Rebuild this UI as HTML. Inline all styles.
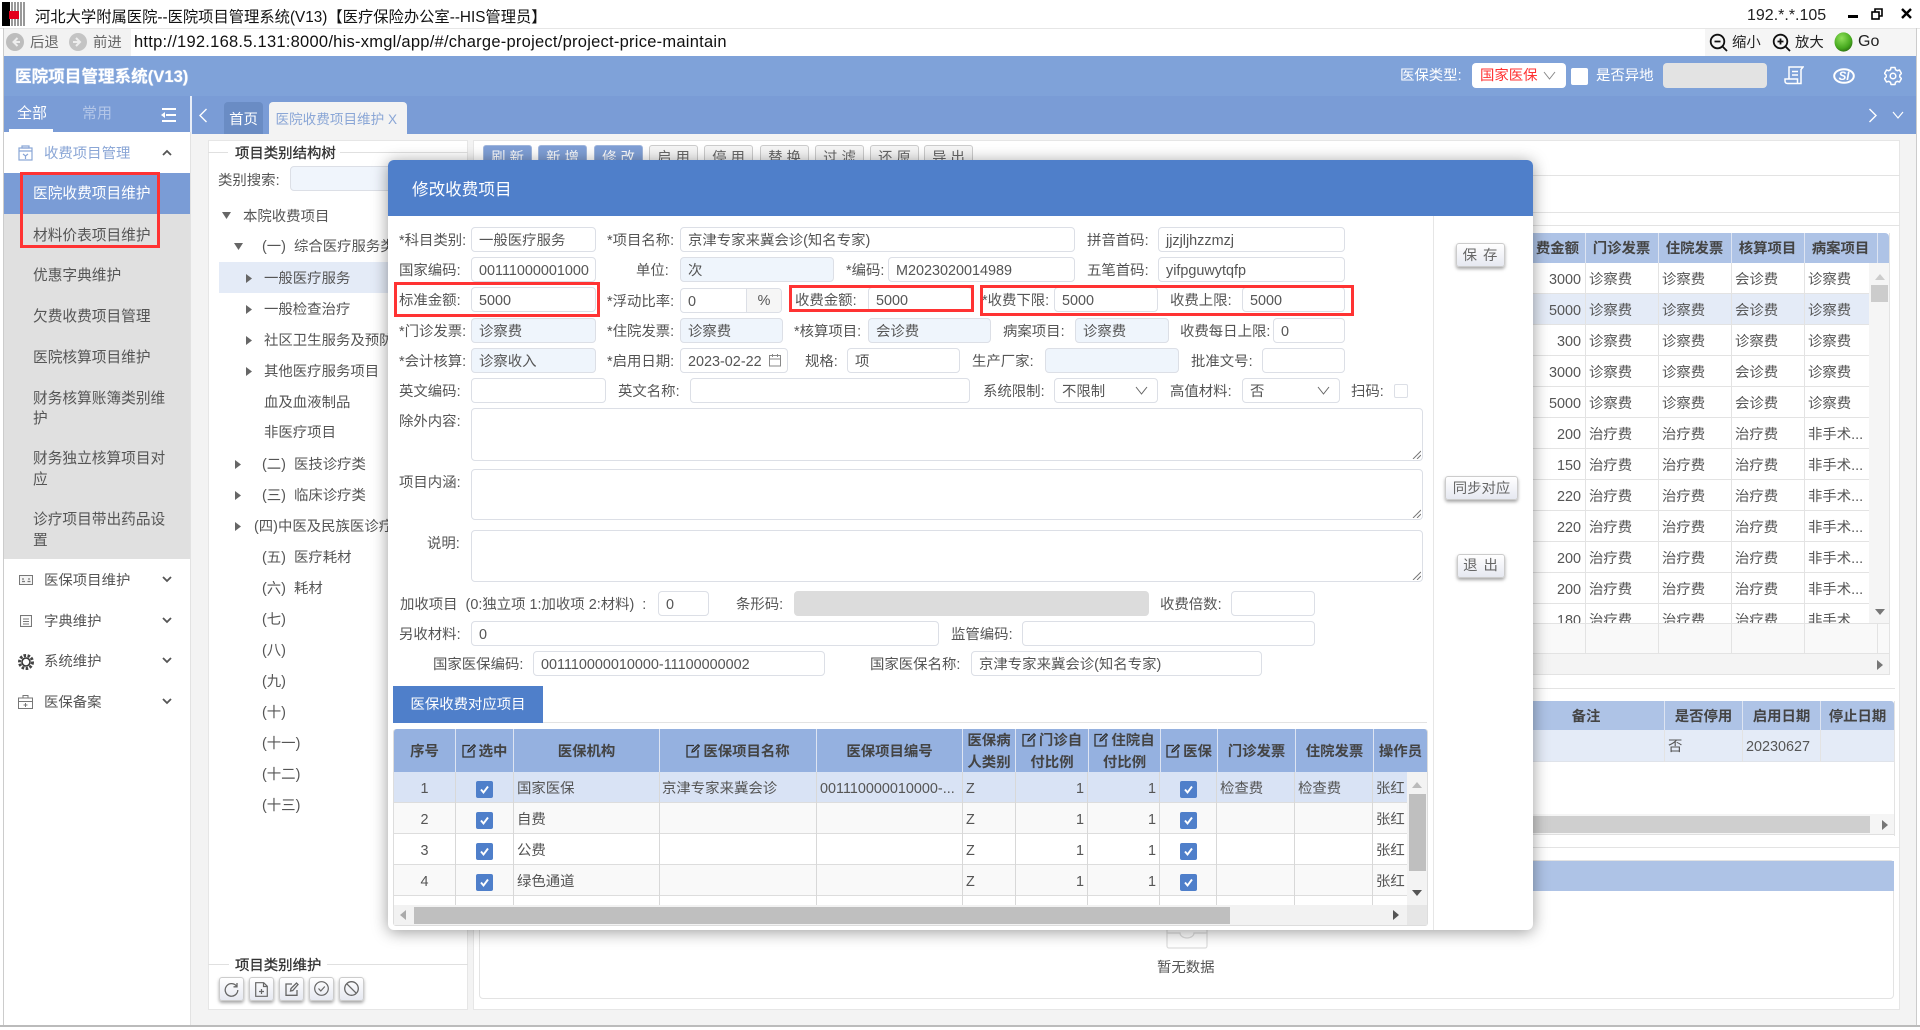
<!DOCTYPE html>
<html lang="zh-CN"><head><meta charset="utf-8"><title>医院项目管理系统</title>
<style>
*{box-sizing:border-box;margin:0;padding:0}
html,body{width:1920px;height:1030px;overflow:hidden;background:#fff}
body{position:relative;font:14.4px/22px "Liberation Sans","Noto Sans CJK SC",sans-serif;color:#555}
div,svg{position:absolute}
div{white-space:nowrap}
.w{color:#fff}
.m{color:#555;left:33px;line-height:23px;font-size:14.7px}
.n{left:44px;color:#555}
.car{left:162px;width:10px;height:7px}
.tr{color:#555}
.i{height:25px;border:1px solid #dcdfe6;border-radius:4px;background:#fff;padding-left:7px;line-height:26px;color:#555;overflow:hidden}
.bl{background:#eff5fc}
.l{height:25px;line-height:28px;color:#555}
.ta{left:471px;width:952px;border:1px solid #dcdfe6;border-radius:4px;background:#fff}
.rz{right:1px;bottom:1px;width:9px;height:9px}
.red{border:3px solid #f33;z-index:5}
.b{background:linear-gradient(#fff,#e6e9f1);border:1px solid #ccc;border-radius:3px;box-shadow:0 2px 3px rgba(0,0,0,.35);text-align:center;color:#666}
.tb{top:145px;width:49px;height:30px;border:1px solid #ccc;border-radius:3px;background:#f5f5f5;text-align:center;line-height:24px;color:#666}
.tbb{background:#7f9fd6;color:#fff;border-color:#a0b6dc}
.th{top:729px;height:43px;line-height:46px;text-align:center;font-weight:700;color:#444;font-size:14.4px}
.th2{line-height:22px;padding-top:1px}
.th svg{position:static;vertical-align:-2px;margin-right:3px}
.ck{width:17px;height:17px;background:#4f7fca;border-radius:2px}
.ck svg{left:3px;top:3px;width:11px;height:11px}
.vl{width:1px;background:#d8d8d8}
.hv{width:1px;background:#dde4f2;top:729px;height:43px}
.hl{height:1px;background:#ddd}
.c{line-height:35px}
.bh{top:233px;height:30px;line-height:33px;font-weight:700;color:#444;text-align:center}
.bh2{top:701px}
.row{left:1533px;width:336px;height:31px;background:#fff;border-bottom:1px solid #e3e3e3}
.bc{line-height:35px;color:#555}
.bvl{width:1px;background:#e3e3e3}
</style></head><body>

<!-- window title -->
<svg style="left:2px;top:2px" width="24" height="24" viewBox="0 0 24 24"><rect width="8" height="24" fill="#000"/><rect x="8" width="16" height="24" fill="#fff"/><g fill="#999"><rect x="9" width="2" height="24"/><rect x="12" width="2" height="24"/><rect x="15" width="2" height="24"/><rect x="18" width="2" height="24"/><rect x="21" width="2" height="24"/></g><rect x="7" y="9" width="10" height="8" fill="#e3001b"/></svg>
<div style="left:35px;top:7px;font-size:15.3px;color:#111">河北大学附属医院--医院项目管理系统(V13)【医疗保险办公室--HIS管理员】</div>
<div style="left:1747px;top:5px;font-size:16px;color:#222">192.*.*.105</div>
<div style="left:1848px;top:15px;width:10px;height:3px;background:#000"></div>
<svg style="left:1871px;top:8px" width="12" height="12" viewBox="0 0 12 12" fill="none" stroke="#000" stroke-width="1.6"><rect x="1" y="4" width="7" height="7"/><path d="M4 4V1h7v7H8"/></svg>
<svg style="left:1901px;top:8px" width="11" height="11" viewBox="0 0 11 11" stroke="#000" stroke-width="2.4"><path d="M1 1l9 9M10 1l-9 9"/></svg>
<div style="left:0;top:28px;width:1920px;height:1px;background:#e6e6e6"></div>

<!-- address bar -->
<div style="left:4px;top:29px;width:127px;height:27px;background:#f2f2f2"></div>
<div style="left:1705px;top:29px;width:211px;height:27px;background:#f5f5f5"></div>
<svg style="left:6px;top:33px" width="18" height="18" viewBox="0 0 18 18"><circle cx="9" cy="9" r="9" fill="#bdbdbd"/><path d="M11.5 5L7.5 9l4 4M8 9h6" fill="none" stroke="#eee" stroke-width="2"/></svg>
<div style="left:30px;top:32px;font-size:14.4px;color:#666">后退</div>
<svg style="left:69px;top:33px" width="18" height="18" viewBox="0 0 18 18"><circle cx="9" cy="9" r="9" fill="#c4c4c4"/><path d="M7 5l4 4-4 4M4 9h6" fill="none" stroke="#eee" stroke-width="2"/></svg>
<div style="left:93px;top:32px;font-size:14.4px;color:#666">前进</div>
<div style="left:134px;top:31px;font-size:16.5px;letter-spacing:.25px;color:#111">http://192.168.5.131:8000/his-xmgl/app/#/charge-project/project-price-maintain</div>
<svg style="left:1709px;top:33px" width="20" height="20" viewBox="0 0 20 20" fill="none" stroke="#111" stroke-width="1.8"><circle cx="8.5" cy="8.5" r="6.8"/><path d="M5.5 8.5h6M13.5 13.500l4.500 4.500"/></svg>
<div style="left:1732px;top:32px;color:#222">缩小</div>
<svg style="left:1772px;top:33px" width="20" height="20" viewBox="0 0 20 20" fill="none" stroke="#111" stroke-width="1.8"><circle cx="8.5" cy="8.5" r="6.8"/><path d="M5.5 8.5h6M8.5 5.500v6M13.5 13.500l4.500 4.500"/></svg>
<div style="left:1795px;top:32px;color:#222">放大</div>
<svg style="left:1834px;top:32px" width="19" height="20" viewBox="0 0 19 20"><defs><radialGradient id="g" cx=".4" cy=".3" r=".75"><stop offset="0" stop-color="#8fe05a"/><stop offset=".7" stop-color="#45a81e"/><stop offset="1" stop-color="#2c6d12"/></radialGradient></defs><ellipse cx="9.5" cy="10" rx="9" ry="9.6" fill="url(#g)"/></svg>
<div style="left:1858px;top:31px;font-size:16px;color:#222">Go</div>

<!-- header -->
<div style="left:4px;top:56px;width:1912px;height:40px;background:#7fa2d9"></div>
<div style="left:15px;top:66px;font-size:16.6px;font-weight:700;color:#fff;text-shadow:0 0 1px #dfe8f7">医院项目管理系统(V13)</div>
<div class="w" style="left:1400px;top:65px">医保类型:</div>
<div style="left:1472px;top:63px;width:94px;height:25px;background:#fff;border-radius:4px;line-height:26px;padding-left:8px;color:#f33">国家医保</div>
<svg style="left:1543px;top:71px" width="13" height="9" viewBox="0 0 13 9" fill="none" stroke="#888"><path d="M1 1l5.500 7L12 1"/></svg>
<div style="left:1571px;top:68px;width:17px;height:17px;background:#fff;border-radius:2px"></div>
<div class="w" style="left:1596px;top:65px">是否异地</div>
<div style="left:1663px;top:63px;width:104px;height:25px;background:#e3e3e3;border-radius:4px"></div>
<svg style="left:1784px;top:66px" width="20" height="19" viewBox="0 0 20 19" fill="none" stroke="#fff" stroke-width="1.5"><path d="M5 13V1h14l-2 2.500V17.500H3.500C2 17.500 1 16.500 1 15v-2h12.500v4.500M8 5.500h6M8 9h6"/></svg>
<svg style="left:1833px;top:68px" width="22" height="16" viewBox="0 0 22 16"><ellipse cx="11" cy="8" rx="9.800" ry="6.800" fill="none" stroke="#fff" stroke-width="2"/><text x="11" y="12" text-anchor="middle" font-family="Liberation Sans" font-size="11.500" font-weight="700" font-style="italic" fill="#fff">SI</text></svg>
<svg style="left:1884px;top:66px" width="18" height="20" viewBox="0 0 18 20" fill="none" stroke="#fff" stroke-width="1.500"><path d="M7 1.500h4l.5 2.200 1.800 1 2.200-.7 2 3.500-1.700 1.500v2l1.700 1.500-2 3.500-2.200-.7-1.800 1-.5 2.200H7l-.5-2.200-1.800-1-2.200.7-2-3.500L2.200 11V9L.5 7.500l2-3.500 2.200.7 1.800-1z" stroke-linejoin="round"/><circle cx="9" cy="10" r="2.800"/></svg>

<!-- tab bar -->
<div style="left:4px;top:96px;width:1912px;height:38px;background:#7a9cd6"></div>
<div style="left:190px;top:96px;width:2px;height:38px;background:#e8eef8"></div>
<div class="w" style="left:17px;top:103px;font-size:15px">全部</div>
<div style="left:82px;top:103px;font-size:15px;color:#b3c6e8">常用</div>
<div style="left:9px;top:129px;width:44px;height:3px;background:#fff"></div>
<svg style="left:160px;top:108px" width="16" height="14" viewBox="0 0 16 14" fill="#fff"><rect x="2" width="14" height="2"/><rect x="6" y="6" width="10" height="2"/><rect x="2" y="12" width="14" height="2"/><path d="M5 4L1 7l4 3z"/></svg>
<svg style="left:198px;top:108px" width="10" height="15" viewBox="0 0 10 15" fill="none" stroke="#fff" stroke-width="1.400"><path d="M8.500 1L2 7.500 8.500 14"/></svg>
<div style="left:224px;top:102px;width:39px;height:32px;background:#6a8cc4;border-radius:4px 4px 0 0;color:#fff;text-align:center;line-height:36px">首页</div>
<div style="left:269px;top:102px;width:138px;height:32px;background:#f3f3f3;border-radius:4px 4px 0 0;color:#8aa6d6;padding-left:6.500px;line-height:36px;font-size:13.600px">医院收费项目维护 X</div>
<svg style="left:1868px;top:108px" width="10" height="15" viewBox="0 0 10 15" fill="none" stroke="#fff" stroke-width="1.400"><path d="M1.500 1L8 7.500 1.500 14"/></svg>
<svg style="left:1892px;top:111px" width="12" height="8" viewBox="0 0 12 8" fill="none" stroke="#fff" stroke-width="1.200"><path d="M1 1l5 6 5-6"/></svg>

<!-- page background -->
<div style="left:4px;top:134px;width:1912px;height:891px;background:#f3f3f3"></div>
<div style="left:0;top:1025px;width:1920px;height:2px;background:#bbb"></div>
<div style="left:3px;top:28px;width:1px;height:997px;background:#ccc"></div>
<div style="left:1916px;top:28px;width:1px;height:997px;background:#ccc"></div>

<!-- sidebar -->
<div style="left:4px;top:132px;width:187px;height:893px;background:#fff;border-right:1px solid #e2e2e2"></div>
<svg style="left:18px;top:145px" width="15" height="16" viewBox="0 0 15 16" fill="none" stroke="#8aa6d6" stroke-width="1.200"><rect x="1" y="3" width="13" height="12"/><path d="M1 6h13M4 1h7v2H4zM5 9l2.500 2L10 9M7.500 11v3"/></svg>
<div class="n" style="top:143px;color:#8aa6d6">收费项目管理</div>
<svg class="car" style="top:149px" viewBox="0 0 10 7" fill="none" stroke="#555" stroke-width="1.800"><path d="M1 6l4-4 4 4"/></svg>
<div style="left:4px;top:173px;width:186px;height:41px;background:#7a9cd6"></div>
<div style="left:4px;top:214px;width:186px;height:345px;background:#e0e0e0"></div>
<div class="m w" style="top:183px;color:#fff">医院收费项目维护</div>
<div class="m" style="top:225px">材料价表项目维护</div>
<div class="m" style="top:265px">优惠字典维护</div>
<div class="m" style="top:306px">欠费收费项目管理</div>
<div class="m" style="top:347px">医院核算项目维护</div>
<div class="m" style="top:388px">财务核算账簿类别维</div>
<div class="m" style="top:408px">护</div>
<div class="m" style="top:448px">财务独立核算项目对</div>
<div class="m" style="top:469px">应</div>
<div class="m" style="top:509px">诊疗项目带出药品设</div>
<div class="m" style="top:530px">置</div>
<div class="red" style="left:20px;top:172px;width:140px;height:76px;z-index:2"></div>
<svg style="left:19px;top:575px" width="14" height="10" viewBox="0 0 14 10" fill="none" stroke="#777"><rect x=".5" y=".5" width="13" height="9" fill="#f4f4f4"/><path d="M3 6.500h3M3 4h2M9 4h2M8.500 6.500h3" stroke-width="1.200"/></svg>
<div class="n" style="top:570px">医保项目维护</div>
<svg class="car" style="top:576px" viewBox="0 0 10 7" fill="none" stroke="#555" stroke-width="1.800"><path d="M1 1l4 4 4-4"/></svg>
<svg style="left:20px;top:615px" width="12" height="12" viewBox="0 0 12 12" fill="none" stroke="#777" stroke-width="1.100"><rect x=".5" y=".5" width="11" height="11"/><path d="M3 4h6M3 6.500h6M3 9h6"/></svg>
<div class="n" style="top:611px">字典维护</div>
<svg class="car" style="top:617px" viewBox="0 0 10 7" fill="none" stroke="#555" stroke-width="1.800"><path d="M1 1l4 4 4-4"/></svg>
<svg style="left:18px;top:654px" width="16" height="16" viewBox="0 0 16 16"><circle cx="8" cy="8" r="6.500" fill="none" stroke="#444" stroke-width="3" stroke-dasharray="2.500 1.500"/><circle cx="8" cy="8" r="4" fill="none" stroke="#333" stroke-width="1.600"/></svg>
<div class="n" style="top:651px">系统维护</div>
<svg class="car" style="top:657px" viewBox="0 0 10 7" fill="none" stroke="#555" stroke-width="1.800"><path d="M1 1l4 4 4-4"/></svg>
<svg style="left:18px;top:695px" width="15" height="14" viewBox="0 0 15 14" fill="none" stroke="#777"><rect x=".5" y="3" width="14" height="10.500"/><path d="M5 3V.5h5V3M.5 6.500h14M7.500 8v4M5.500 10h4"/></svg>
<div class="n" style="top:692px">医保备案</div>
<svg class="car" style="top:698px" viewBox="0 0 10 7" fill="none" stroke="#555" stroke-width="1.800"><path d="M1 1l4 4 4-4"/></svg>

<!-- left tree panel -->
<div style="left:208px;top:140px;width:260px;height:870px;background:#fff;border:1px solid #e6e6e6"></div>
<div style="left:208px;top:152px;width:20px;height:1px;background:#e0e0e0"></div>
<div style="left:340px;top:152px;width:128px;height:1px;background:#e0e0e0"></div>
<div style="left:235px;top:143px;color:#333;-webkit-text-stroke:.3px #333">项目类别结构树</div>
<div style="left:218px;top:170px">类别搜索:</div>
<div style="left:290px;top:166px;width:170px;height:25px;background:#f0f5fc;border:1px solid #dcdfe6;border-radius:4px"></div>
<div class="tr" style="left:243px;top:206px">本院收费项目</div>
<svg style="left:222px;top:212px" width="9" height="7" viewBox="0 0 9 7" fill="#666"><path d="M0 0h9L4.500 7z"/></svg>
<div class="tr" style="left:262px;top:236px">(一)&nbsp;&nbsp;综合医疗服务类</div>
<svg style="left:234px;top:243px" width="9" height="7" viewBox="0 0 9 7" fill="#666"><path d="M0 0h9L4.500 7z"/></svg>
<div style="left:219px;top:262px;width:170px;height:31px;background:#e4ebf7"></div>
<div class="tr" style="left:264px;top:268px">一般医疗服务</div>
<svg style="left:246px;top:274px" width="6" height="9" viewBox="0 0 6 9" fill="#666"><path d="M0 0v9l6-4.500z"/></svg>
<div class="tr" style="left:264px;top:299px">一般检查治疗</div>
<svg style="left:246px;top:305px" width="6" height="9" viewBox="0 0 6 9" fill="#666"><path d="M0 0v9l6-4.500z"/></svg>
<div class="tr" style="left:264px;top:330px">社区卫生服务及预防</div>
<svg style="left:246px;top:336px" width="6" height="9" viewBox="0 0 6 9" fill="#666"><path d="M0 0v9l6-4.500z"/></svg>
<div class="tr" style="left:264px;top:361px">其他医疗服务项目</div>
<svg style="left:246px;top:367px" width="6" height="9" viewBox="0 0 6 9" fill="#666"><path d="M0 0v9l6-4.500z"/></svg>
<div class="tr" style="left:264px;top:392px">血及血液制品</div>
<div class="tr" style="left:264px;top:422px">非医疗项目</div>
<div class="tr" style="left:262px;top:454px">(二)&nbsp;&nbsp;医技诊疗类</div>
<svg style="left:235px;top:460px" width="6" height="9" viewBox="0 0 6 9" fill="#666"><path d="M0 0v9l6-4.500z"/></svg>
<div class="tr" style="left:262px;top:485px">(三)&nbsp;&nbsp;临床诊疗类</div>
<svg style="left:235px;top:491px" width="6" height="9" viewBox="0 0 6 9" fill="#666"><path d="M0 0v9l6-4.500z"/></svg>
<div class="tr" style="left:254px;top:516px">(四)中医及民族医诊疗</div>
<svg style="left:235px;top:522px" width="6" height="9" viewBox="0 0 6 9" fill="#666"><path d="M0 0v9l6-4.500z"/></svg>
<div class="tr" style="left:262px;top:547px">(五)&nbsp;&nbsp;医疗耗材</div>
<div class="tr" style="left:262px;top:578px">(六)&nbsp;&nbsp;耗材</div>
<div class="tr" style="left:262px;top:609px">(七)</div>
<div class="tr" style="left:262px;top:640px">(八)</div>
<div class="tr" style="left:262px;top:671px">(九)</div>
<div class="tr" style="left:262px;top:702px">(十)</div>
<div class="tr" style="left:262px;top:733px">(十一)</div>
<div class="tr" style="left:262px;top:764px">(十二)</div>
<div class="tr" style="left:262px;top:795px">(十三)</div>
<div style="left:208px;top:964px;width:21px;height:1px;background:#e0e0e0"></div>
<div style="left:327px;top:964px;width:141px;height:1px;background:#e0e0e0"></div>
<div style="left:235px;top:955px;color:#333;-webkit-text-stroke:.3px #333">项目类别维护</div>
<div class="b" style="left:219px;top:977px;width:25px;height:24px"></div>
<div class="b" style="left:249px;top:977px;width:25px;height:24px"></div>
<div class="b" style="left:279px;top:977px;width:25px;height:24px"></div>
<div class="b" style="left:309px;top:977px;width:25px;height:24px"></div>
<div class="b" style="left:339px;top:977px;width:25px;height:24px"></div>
<svg style="left:224px;top:982px" width="15" height="15" viewBox="0 0 15 15" fill="none" stroke="#666" stroke-width="1.300"><path d="M12.800 4.500A6.300 6.300 0 1 0 13.800 8M13 1v3.800H9.500"/></svg>
<svg style="left:255px;top:982px" width="13" height="15" viewBox="0 0 13 15" fill="none" stroke="#666" stroke-width="1.200"><path d="M.7.700h8l3.600 3.600v10H.7zM8.500.700v3.800h3.800M6.500 7v5M4 9.500h5"/></svg>
<svg style="left:285px;top:982px" width="14" height="14" viewBox="0 0 14 14" fill="none" stroke="#666" stroke-width="1.300"><path d="M7 2H1v11.300h11V8M5.500 9l.5-2.500L11.500 1 13 2.500 7.800 8.500z"/></svg>
<svg style="left:314px;top:981px" width="15" height="15" viewBox="0 0 15 15" fill="none" stroke="#666" stroke-width="1.200"><circle cx="7.500" cy="7.500" r="6.800"/><path d="M4.500 7.500l2.300 2.500 4-4.500"/></svg>
<svg style="left:344px;top:981px" width="15" height="15" viewBox="0 0 15 15" fill="none" stroke="#666" stroke-width="1.300"><circle cx="7.500" cy="7.500" r="6.800"/><path d="M2.800 2.800l9.400 9.400"/></svg>

<!-- right panel behind modal -->
<div style="left:473px;top:140px;width:1427px;height:870px;background:#fff;border:1px solid #e6e6e6"></div>
<div class="tb tbb" style="left:483px">刷 新</div>
<div class="tb tbb" style="left:538px">新 增</div>
<div class="tb tbb" style="left:594px">修 改</div>
<div class="tb" style="left:649px">启 用</div>
<div class="tb" style="left:704px">停 用</div>
<div class="tb" style="left:760px">替 换</div>
<div class="tb" style="left:815px">过 滤</div>
<div class="tb" style="left:870px">还 原</div>
<div class="tb" style="left:924px">导 出</div>
<div style="left:473px;top:175px;width:1427px;height:1px;background:#e3e3e3"></div>
<div style="left:473px;top:212px;width:1427px;height:1px;background:#e3e3e3"></div>
<div style="left:473px;top:225px;width:1427px;height:1px;background:#e3e3e3"></div>

<!-- right table top -->
<div style="left:1500px;top:233px;width:389px;height:30px;background:#aec3e6;border-radius:0 4px 0 0"></div>
<div class="bh" style="left:1533px;width:52px;overflow:hidden;text-align:right;padding-right:6px">费金额</div>
<div class="bh" style="left:1585px;width:73px">门诊发票</div>
<div class="bh" style="left:1658px;width:73px">住院发票</div>
<div class="bh" style="left:1731px;width:73px">核算项目</div>
<div class="bh" style="left:1804px;width:73px">病案项目</div>
<div class="row" style="top:263px"></div>
<div class="row" style="top:294px;background:#e4ebf7"></div>
<div class="row" style="top:325px"></div>
<div class="row" style="top:356px"></div>
<div class="row" style="top:387px"></div>
<div class="row" style="top:418px"></div>
<div class="row" style="top:449px"></div>
<div class="row" style="top:480px"></div>
<div class="row" style="top:511px"></div>
<div class="row" style="top:542px"></div>
<div class="row" style="top:573px"></div>

<div class="bc" style="left:1533px;width:48px;text-align:right;top:263px">3000</div><div class="bc" style="left:1589px;top:263px">诊察费</div><div class="bc" style="left:1662px;top:263px">诊察费</div><div class="bc" style="left:1735px;top:263px">会诊费</div><div class="bc" style="left:1808px;top:263px">诊察费</div>
<div class="bc" style="left:1533px;width:48px;text-align:right;top:294px">5000</div><div class="bc" style="left:1589px;top:294px">诊察费</div><div class="bc" style="left:1662px;top:294px">诊察费</div><div class="bc" style="left:1735px;top:294px">会诊费</div><div class="bc" style="left:1808px;top:294px">诊察费</div>
<div class="bc" style="left:1533px;width:48px;text-align:right;top:325px">300</div><div class="bc" style="left:1589px;top:325px">诊察费</div><div class="bc" style="left:1662px;top:325px">诊察费</div><div class="bc" style="left:1735px;top:325px">诊察费</div><div class="bc" style="left:1808px;top:325px">诊察费</div>
<div class="bc" style="left:1533px;width:48px;text-align:right;top:356px">3000</div><div class="bc" style="left:1589px;top:356px">诊察费</div><div class="bc" style="left:1662px;top:356px">诊察费</div><div class="bc" style="left:1735px;top:356px">会诊费</div><div class="bc" style="left:1808px;top:356px">诊察费</div>
<div class="bc" style="left:1533px;width:48px;text-align:right;top:387px">5000</div><div class="bc" style="left:1589px;top:387px">诊察费</div><div class="bc" style="left:1662px;top:387px">诊察费</div><div class="bc" style="left:1735px;top:387px">会诊费</div><div class="bc" style="left:1808px;top:387px">诊察费</div>
<div class="bc" style="left:1533px;width:48px;text-align:right;top:418px">200</div><div class="bc" style="left:1589px;top:418px">治疗费</div><div class="bc" style="left:1662px;top:418px">治疗费</div><div class="bc" style="left:1735px;top:418px">治疗费</div><div class="bc" style="left:1808px;top:418px">非手术...</div>
<div class="bc" style="left:1533px;width:48px;text-align:right;top:449px">150</div><div class="bc" style="left:1589px;top:449px">治疗费</div><div class="bc" style="left:1662px;top:449px">治疗费</div><div class="bc" style="left:1735px;top:449px">治疗费</div><div class="bc" style="left:1808px;top:449px">非手术...</div>
<div class="bc" style="left:1533px;width:48px;text-align:right;top:480px">220</div><div class="bc" style="left:1589px;top:480px">治疗费</div><div class="bc" style="left:1662px;top:480px">治疗费</div><div class="bc" style="left:1735px;top:480px">治疗费</div><div class="bc" style="left:1808px;top:480px">非手术...</div>
<div class="bc" style="left:1533px;width:48px;text-align:right;top:511px">220</div><div class="bc" style="left:1589px;top:511px">治疗费</div><div class="bc" style="left:1662px;top:511px">治疗费</div><div class="bc" style="left:1735px;top:511px">治疗费</div><div class="bc" style="left:1808px;top:511px">非手术...</div>
<div class="bc" style="left:1533px;width:48px;text-align:right;top:542px">200</div><div class="bc" style="left:1589px;top:542px">治疗费</div><div class="bc" style="left:1662px;top:542px">治疗费</div><div class="bc" style="left:1735px;top:542px">治疗费</div><div class="bc" style="left:1808px;top:542px">非手术...</div>
<div class="bc" style="left:1533px;width:48px;text-align:right;top:573px">200</div><div class="bc" style="left:1589px;top:573px">治疗费</div><div class="bc" style="left:1662px;top:573px">治疗费</div><div class="bc" style="left:1735px;top:573px">治疗费</div><div class="bc" style="left:1808px;top:573px">非手术...</div>
<div style="left:1533px;top:604px;width:336px;height:19px;overflow:hidden"><div class="bc" style="left:0;width:48px;text-align:right;top:0">180</div><div class="bc" style="left:56px;top:0">治疗费</div><div class="bc" style="left:129px;top:0">治疗费</div><div class="bc" style="left:202px;top:0">治疗费</div><div class="bc" style="left:275px;top:0">非手术...</div></div>

<div style="left:1869px;top:263px;width:20px;height:360px;background:#f5f5f5"></div>
<svg style="left:1875px;top:274px" width="10" height="6" viewBox="0 0 10 6" fill="#ccc"><path d="M5 0l5 6H0z"/></svg>
<div style="left:1871px;top:285px;width:17px;height:17px;background:#ccc"></div>
<svg style="left:1875px;top:609px" width="10" height="6" viewBox="0 0 10 6" fill="#777"><path d="M0 0h10L5 6z"/></svg>
<div style="left:1533px;top:623px;width:356px;height:31px;background:#f9f9f9;border-top:1px solid #e3e3e3;border-bottom:1px solid #e3e3e3"></div>
<div style="left:1533px;top:654px;width:356px;height:21px;background:#f4f4f4;border-bottom:1px solid #e3e3e3"></div>
<svg style="left:1877px;top:660px" width="6" height="10" viewBox="0 0 6 10" fill="#777"><path d="M0 0l6 5-6 5z"/></svg>
<div style="left:1889px;top:233px;width:1px;height:442px;background:#e3e3e3"></div>
<div class="bvl" style="left:1585px;top:263px;height:391px"></div>
<div class="bvl" style="left:1658px;top:263px;height:391px"></div>
<div class="bvl" style="left:1731px;top:263px;height:391px"></div>
<div class="bvl" style="left:1804px;top:263px;height:391px"></div>
<div class="bvl" style="left:1877px;top:623px;height:31px"></div>
<div class="hv" style="left:1585px;top:233px;height:30px"></div>
<div class="hv" style="left:1658px;top:233px;height:30px"></div>
<div class="hv" style="left:1731px;top:233px;height:30px"></div>
<div class="hv" style="left:1804px;top:233px;height:30px"></div>
<div class="hv" style="left:1877px;top:233px;height:30px"></div>
<div style="left:473px;top:688px;width:1422px;height:1px;background:#e3e3e3"></div>

<!-- middle table -->
<div style="left:1500px;top:701px;width:394px;height:29px;background:#aec3e6;border-radius:0 3px 0 0"></div>
<div class="bh bh2" style="left:1533px;width:106px;height:29px">备注</div>
<div class="bh bh2" style="left:1665px;width:77px;height:29px">是否停用</div>
<div class="bh bh2" style="left:1743px;width:77px;height:29px">启用日期</div>
<div class="bh bh2" style="left:1821px;width:73px;height:29px">停止日期</div>
<div style="left:1533px;top:730px;width:361px;height:32px;background:#e4ebf7;border-bottom:1px solid #dfe3ea"></div>
<div class="hv" style="left:1664px;top:701px;height:29px"></div><div class="hv" style="left:1742px;top:701px;height:29px"></div><div class="hv" style="left:1820px;top:701px;height:29px"></div>
<div class="bvl" style="left:1664px;top:730px;height:32px"></div><div class="bvl" style="left:1742px;top:730px;height:32px"></div><div class="bvl" style="left:1820px;top:730px;height:32px"></div>
<div class="bc" style="left:1668px;top:730px">否</div>
<div class="bc" style="left:1746px;top:730px">20230627</div>
<div style="left:1533px;top:814px;width:361px;height:21px;background:#f5f5f5;border-bottom:1px solid #e0e0e0"></div>
<div style="left:1533px;top:816px;width:337px;height:17px;background:#cfcfcf"></div>
<svg style="left:1882px;top:820px" width="6" height="10" viewBox="0 0 6 10" fill="#777"><path d="M0 0l6 5-6 5z"/></svg>
<div style="left:1894px;top:701px;width:1px;height:135px;background:#e3e3e3"></div>
<div style="left:473px;top:847px;width:1427px;height:1px;background:#e3e3e3"></div>

<!-- lower table -->
<div style="left:479px;top:860px;width:1415px;height:139px;border:1px solid #e3e3e3;border-radius:4px"></div>
<div style="left:480px;top:861px;width:1414px;height:30px;background:#aec3e6"></div>
<svg style="left:1165px;top:925px" width="44" height="25" viewBox="0 0 44 25" fill="#fff" stroke="#ddd" stroke-width="1.200"><path d="M2 3v18a2 2 0 0 0 2 2h36a2 2 0 0 0 2-2V3"/><path d="M2 8h13a7 5 0 0 0 14 0h13" fill="none"/></svg>
<div style="left:1157px;top:957px;color:#555">暂无数据</div>

<!-- modal -->
<div style="left:388px;top:160px;width:1145px;height:770px;background:#fff;border-radius:6px;box-shadow:0 2px 16px rgba(0,0,0,.4)"></div>
<div style="left:388px;top:160px;width:1145px;height:56px;background:#4f7fca;border-radius:6px 6px 0 0"></div>
<div style="left:412px;top:179px;font-size:16.600px;line-height:22px;color:#fff">修改收费项目</div>
<div style="left:1433px;top:216px;width:1px;height:714px;background:#e6e6e6"></div>

<div class="l" style="left:399px;top:227px">*科目类别:</div><div class="i" style="left:471px;top:227px;width:125px">一般医疗服务</div>
<div class="l" style="left:607px;top:227px">*项目名称:</div><div class="i" style="left:680px;top:227px;width:395px">京津专家来冀会诊(知名专家)</div>
<div class="l" style="left:1087px;top:227px">拼音首码:</div><div class="i" style="left:1158px;top:227px;width:187px">jjzjljhzzmzj</div>

<div class="l" style="left:399px;top:257px">国家编码:</div><div class="i" style="left:471px;top:257px;width:125px;padding-right:6px">00111000001000</div>
<div class="l" style="left:636px;top:257px">单位:</div><div class="i bl" style="left:680px;top:257px;width:154px">次</div>
<div class="l" style="left:846px;top:257px">*编码:</div><div class="i" style="left:888px;top:257px;width:187px">M2023020014989</div>
<div class="l" style="left:1087px;top:257px">五笔首码:</div><div class="i" style="left:1158px;top:257px;width:187px">yifpguwytqfp</div>

<div class="l" style="left:399px;top:287px">标准金额:</div><div class="i" style="left:471px;top:287px;width:125px">5000</div>
<div class="l" style="left:607px;top:288px">*浮动比率:</div><div class="i" style="left:680px;top:288px;width:102px">0</div>
<div style="left:746px;top:289px;width:35px;height:23px;background:#f6f6f6;border-left:1px solid #dcdfe6;text-align:center;line-height:25px;border-radius:0 3px 3px 0">%</div>
<div class="l" style="left:795px;top:287px">收费金额:</div><div class="i" style="left:868px;top:287px;width:104px">5000</div>
<div class="l" style="left:982px;top:287px">*收费下限:</div><div class="i" style="left:1054px;top:287px;width:104px">5000</div>
<div class="l" style="left:1170px;top:287px">收费上限:</div><div class="i" style="left:1242px;top:287px;width:103px">5000</div>
<div class="red" style="left:394px;top:282px;width:206px;height:35px"></div>
<div class="red" style="left:789px;top:285px;width:185px;height:27px"></div>
<div class="red" style="left:980px;top:285px;width:374px;height:31px"></div>

<div class="l" style="left:399px;top:318px">*门诊发票:</div><div class="i bl" style="left:471px;top:318px;width:125px">诊察费</div>
<div class="l" style="left:607px;top:318px">*住院发票:</div><div class="i bl" style="left:680px;top:318px;width:103px">诊察费</div>
<div class="l" style="left:794px;top:318px">*核算项目:</div><div class="i bl" style="left:868px;top:318px;width:123px">会诊费</div>
<div class="l" style="left:1003px;top:318px">病案项目:</div><div class="i bl" style="left:1075px;top:318px;width:94px">诊察费</div>
<div class="l" style="left:1180px;top:318px">收费每日上限:</div><div class="i" style="left:1273px;top:318px;width:72px">0</div>

<div class="l" style="left:399px;top:348px">*会计核算:</div><div class="i bl" style="left:471px;top:348px;width:125px">诊察收入</div>
<div class="l" style="left:607px;top:348px">*启用日期:</div><div class="i" style="left:680px;top:348px;width:108px">2023-02-22</div>
<svg style="left:768px;top:353px" width="14" height="14" viewBox="0 0 14 14" fill="none" stroke="#888"><rect x="1.500" y="2.500" width="11" height="10.500"/><path d="M1.500 6h11M4.500 1v3M9.500 1v3"/></svg>
<div class="l" style="left:805px;top:348px">规格:</div><div class="i" style="left:847px;top:348px;width:113px">项</div>
<div class="l" style="left:972px;top:348px">生产厂家:</div><div class="i bl" style="left:1045px;top:348px;width:134px"></div>
<div class="l" style="left:1191px;top:348px">批准文号:</div><div class="i" style="left:1262px;top:348px;width:83px"></div>

<div class="l" style="left:399px;top:378px">英文编码:</div><div class="i" style="left:471px;top:378px;width:135px"></div>
<div class="l" style="left:618px;top:378px">英文名称:</div><div class="i" style="left:690px;top:378px;width:280px"></div>
<div class="l" style="left:983px;top:378px">系统限制:</div><div class="i" style="left:1054px;top:378px;width:104px">不限制</div>
<svg style="left:1135px;top:386px" width="13" height="9" viewBox="0 0 13 9" fill="none" stroke="#666"><path d="M1 1l5.500 7L12 1"/></svg>
<div class="l" style="left:1170px;top:378px">高值材料:</div><div class="i" style="left:1242px;top:378px;width:98px">否</div>
<svg style="left:1317px;top:386px" width="13" height="9" viewBox="0 0 13 9" fill="none" stroke="#666"><path d="M1 1l5.500 7L12 1"/></svg>
<div class="l" style="left:1351px;top:378px">扫码:</div>
<div style="left:1394px;top:384px;width:14px;height:14px;border:1px solid #dcdfe6;border-radius:2px;background:#fff"></div>

<div class="l" style="left:399px;top:408px">除外内容:</div>
<div class="ta" style="top:408px;height:53px"><svg class="rz" viewBox="0 0 9 9" stroke="#777"><path d="M1 9l8-8M5 9l4-4"/></svg></div>
<div class="l" style="left:399px;top:469px">项目内涵:</div>
<div class="ta" style="top:469px;height:51px"><svg class="rz" viewBox="0 0 9 9" stroke="#777"><path d="M1 9l8-8M5 9l4-4"/></svg></div>
<div class="l" style="left:427px;top:530px">说明:</div>
<div class="ta" style="top:530px;height:52px"><svg class="rz" viewBox="0 0 9 9" stroke="#777"><path d="M1 9l8-8M5 9l4-4"/></svg></div>

<div class="l" style="left:400px;top:591px">加收项目&nbsp;&nbsp;(0:独立项 1:加收项 2:材料)&nbsp;&nbsp;:</div><div class="i" style="left:658px;top:591px;width:51px">0</div>
<div class="l" style="left:736px;top:591px">条形码:</div><div class="i" style="left:794px;top:591px;width:355px;background:#dcdcdc;border-color:#dcdcdc"></div>
<div class="l" style="left:1160px;top:591px">收费倍数:</div><div class="i" style="left:1231px;top:591px;width:84px"></div>
<div class="l" style="left:399px;top:621px">另收材料:</div><div class="i" style="left:471px;top:621px;width:468px">0</div>
<div class="l" style="left:951px;top:621px">监管编码:</div><div class="i" style="left:1022px;top:621px;width:293px"></div>
<div class="l" style="left:433px;top:651px">国家医保编码:</div><div class="i" style="left:533px;top:651px;width:292px">001110000010000-11100000002</div>
<div class="l" style="left:870px;top:651px">国家医保名称:</div><div class="i" style="left:971px;top:651px;width:291px">京津专家来冀会诊(知名专家)</div>

<div style="left:393px;top:722px;width:1034px;height:1px;background:#e3e3e3"></div>
<div style="left:393px;top:686px;width:150px;height:37px;background:#4f7fca;color:#fff;text-align:center;line-height:39px">医保收费对应项目</div>

<!-- modal table -->
<div style="left:393px;top:729px;width:1035px;height:197px;border:1px solid #ddd;border-radius:3px;background:#fff"></div>
<div style="left:394px;top:729px;width:1033px;height:43px;background:#95b1e0;border-radius:3px 3px 0 0"></div>
<div class="th" style="left:394px;width:61px">序号</div>
<div class="th" style="left:456px;width:57px"><svg width="14" height="14" viewBox="0 0 14 14" fill="none" stroke="#333" stroke-width="1.300"><path d="M8 1.500H1v11.500h11V6M6 8l.5-2L12 .8 13.300 2 8 7.500z"/></svg>选中</div>
<div class="th" style="left:514px;width:145px">医保机构</div>
<div class="th" style="left:660px;width:156px"><svg width="14" height="14" viewBox="0 0 14 14" fill="none" stroke="#333" stroke-width="1.300"><path d="M8 1.500H1v11.500h11V6M6 8l.5-2L12 .8 13.300 2 8 7.500z"/></svg>医保项目名称</div>
<div class="th" style="left:817px;width:145px">医保项目编号</div>
<div class="th th2" style="left:963px;width:52px">医保病<br>人类别</div>
<div class="th th2" style="left:1016px;width:72px"><svg width="14" height="14" viewBox="0 0 14 14" fill="none" stroke="#333" stroke-width="1.300"><path d="M8 1.500H1v11.500h11V6M6 8l.5-2L12 .8 13.300 2 8 7.500z"/></svg>门诊自<br>付比例</div>
<div class="th th2" style="left:1089px;width:71px"><svg width="14" height="14" viewBox="0 0 14 14" fill="none" stroke="#333" stroke-width="1.300"><path d="M8 1.500H1v11.500h11V6M6 8l.5-2L12 .8 13.300 2 8 7.500z"/></svg>住院自<br>付比例</div>
<div class="th" style="left:1161px;width:56px"><svg width="14" height="14" viewBox="0 0 14 14" fill="none" stroke="#333" stroke-width="1.300"><path d="M8 1.500H1v11.500h11V6M6 8l.5-2L12 .8 13.300 2 8 7.500z"/></svg>医保</div>
<div class="th" style="left:1218px;width:77px">门诊发票</div>
<div class="th" style="left:1296px;width:77px">住院发票</div>
<div class="th" style="left:1374px;width:53px;overflow:hidden">操作员</div>
<div class="hv" style="left:455px"></div><div class="hv" style="left:513px"></div><div class="hv" style="left:659px"></div><div class="hv" style="left:816px"></div><div class="hv" style="left:962px"></div><div class="hv" style="left:1015px"></div><div class="hv" style="left:1088px"></div><div class="hv" style="left:1160px"></div><div class="hv" style="left:1217px"></div><div class="hv" style="left:1295px"></div><div class="hv" style="left:1373px"></div>

<div style="left:394px;top:772px;width:1013px;height:31px;background:#d9e3f5"></div>
<div style="left:394px;top:803px;width:1013px;height:31px;background:#f9f9f9"></div>
<div style="left:394px;top:865px;width:1013px;height:31px;background:#f9f9f9"></div>
<div class="hl" style="left:394px;top:802px;width:1013px"></div>
<div class="hl" style="left:394px;top:833px;width:1013px"></div>
<div class="hl" style="left:394px;top:864px;width:1013px"></div>
<div class="hl" style="left:394px;top:895px;width:1013px"></div>
<div class="vl" style="left:455px;top:772px;height:133px"></div><div class="vl" style="left:513px;top:772px;height:133px"></div><div class="vl" style="left:659px;top:772px;height:133px"></div><div class="vl" style="left:816px;top:772px;height:133px"></div><div class="vl" style="left:962px;top:772px;height:133px"></div><div class="vl" style="left:1015px;top:772px;height:133px"></div><div class="vl" style="left:1087px;top:772px;height:133px"></div><div class="vl" style="left:1159px;top:772px;height:133px"></div><div class="vl" style="left:1216px;top:772px;height:133px"></div><div class="vl" style="left:1294px;top:772px;height:133px"></div><div class="vl" style="left:1372px;top:772px;height:133px"></div>

<div class="c" style="left:394px;width:61px;text-align:center;top:772px">1</div>
<div class="c" style="left:394px;width:61px;text-align:center;top:803px">2</div>
<div class="c" style="left:394px;width:61px;text-align:center;top:834px">3</div>
<div class="c" style="left:394px;width:61px;text-align:center;top:865px">4</div>
<div class="ck" style="left:476px;top:781px"><svg viewBox="0 0 11 11" fill="none" stroke="#fff" stroke-width="1.900"><path d="M2 5.500l2.500 3L9 2.500"/></svg></div>
<div class="ck" style="left:476px;top:812px"><svg viewBox="0 0 11 11" fill="none" stroke="#fff" stroke-width="1.900"><path d="M2 5.500l2.500 3L9 2.500"/></svg></div>
<div class="ck" style="left:476px;top:843px"><svg viewBox="0 0 11 11" fill="none" stroke="#fff" stroke-width="1.900"><path d="M2 5.500l2.500 3L9 2.500"/></svg></div>
<div class="ck" style="left:476px;top:874px"><svg viewBox="0 0 11 11" fill="none" stroke="#fff" stroke-width="1.900"><path d="M2 5.500l2.500 3L9 2.500"/></svg></div>
<div class="c" style="left:517px;top:772px">国家医保</div>
<div class="c" style="left:517px;top:803px">自费</div>
<div class="c" style="left:517px;top:834px">公费</div>
<div class="c" style="left:517px;top:865px">绿色通道</div>
<div class="c" style="left:662px;top:772px">京津专家来冀会诊</div>
<div class="c" style="left:820px;top:772px">001110000010000-...</div>
<div class="c" style="left:966px;top:772px">Z</div><div class="c" style="left:966px;top:803px">Z</div><div class="c" style="left:966px;top:834px">Z</div><div class="c" style="left:966px;top:865px">Z</div>
<div class="c" style="left:1060px;width:24px;text-align:right;top:772px">1</div><div class="c" style="left:1060px;width:24px;text-align:right;top:803px">1</div><div class="c" style="left:1060px;width:24px;text-align:right;top:834px">1</div><div class="c" style="left:1060px;width:24px;text-align:right;top:865px">1</div>
<div class="c" style="left:1132px;width:24px;text-align:right;top:772px">1</div><div class="c" style="left:1132px;width:24px;text-align:right;top:803px">1</div><div class="c" style="left:1132px;width:24px;text-align:right;top:834px">1</div><div class="c" style="left:1132px;width:24px;text-align:right;top:865px">1</div>
<div class="ck" style="left:1180px;top:781px"><svg viewBox="0 0 11 11" fill="none" stroke="#fff" stroke-width="1.900"><path d="M2 5.500l2.500 3L9 2.500"/></svg></div>
<div class="ck" style="left:1180px;top:812px"><svg viewBox="0 0 11 11" fill="none" stroke="#fff" stroke-width="1.900"><path d="M2 5.500l2.500 3L9 2.500"/></svg></div>
<div class="ck" style="left:1180px;top:843px"><svg viewBox="0 0 11 11" fill="none" stroke="#fff" stroke-width="1.900"><path d="M2 5.500l2.500 3L9 2.500"/></svg></div>
<div class="ck" style="left:1180px;top:874px"><svg viewBox="0 0 11 11" fill="none" stroke="#fff" stroke-width="1.900"><path d="M2 5.500l2.500 3L9 2.500"/></svg></div>
<div class="c" style="left:1220px;top:772px">检查费</div>
<div class="c" style="left:1298px;top:772px">检查费</div>
<div class="c" style="left:1376px;top:772px">张红</div><div class="c" style="left:1376px;top:803px">张红</div><div class="c" style="left:1376px;top:834px">张红</div><div class="c" style="left:1376px;top:865px">张红</div>

<div style="left:1407px;top:772px;width:20px;height:133px;background:#f3f3f3"></div>
<svg style="left:1412px;top:782px" width="10" height="6" viewBox="0 0 10 6" fill="#bbb"><path d="M5 0l5 6H0z"/></svg>
<div style="left:1409px;top:794px;width:17px;height:77px;background:#bfbfbf"></div>
<svg style="left:1412px;top:890px" width="10" height="6" viewBox="0 0 10 6" fill="#555"><path d="M0 0h10L5 6z"/></svg>
<div style="left:394px;top:905px;width:1013px;height:20px;background:#f2f2f2"></div>
<div style="left:1407px;top:905px;width:20px;height:20px;background:#e6e6e6"></div>
<svg style="left:400px;top:910px" width="6" height="10" viewBox="0 0 6 10" fill="#aaa"><path d="M6 0L0 5l6 5z"/></svg>
<div style="left:414px;top:907px;width:816px;height:17px;background:#bfbfbf"></div>
<svg style="left:1393px;top:910px" width="6" height="10" viewBox="0 0 6 10" fill="#555"><path d="M0 0l6 5-6 5z"/></svg>

<!-- modal side buttons -->
<div class="b" style="left:1456px;top:243px;width:49px;height:24px;line-height:25px;letter-spacing:1px">保 存</div>
<div class="b" style="left:1445px;top:476px;width:73px;height:24px;line-height:25px">同步对应</div>
<div class="b" style="left:1457px;top:554px;width:48px;height:24px;line-height:23px;letter-spacing:1px">退 出</div>
</body></html>
